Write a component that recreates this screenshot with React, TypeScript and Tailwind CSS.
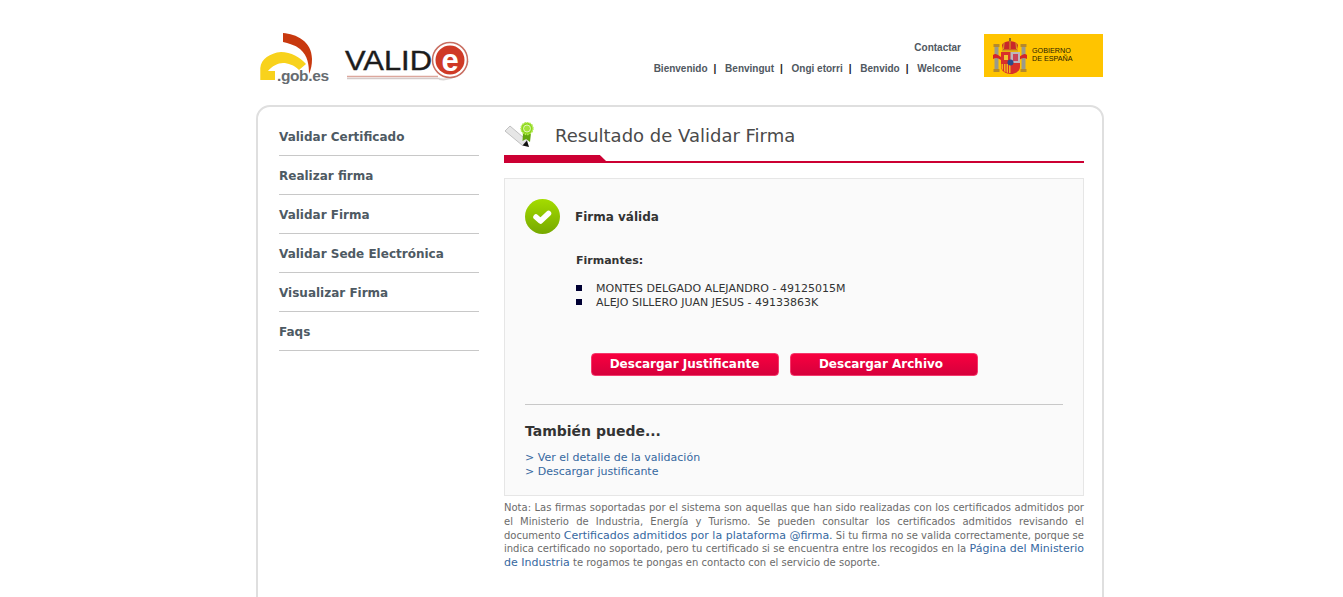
const menu = [
  "Validar Certificado",
  "Realizar firma",
  "Validar Firma",
  "Validar Sede Electrónica",
  "Visualizar Firma",
  "Faqs",
];

const idiomas = ["Bienvenido", "Benvingut", "Ongi etorri", "Benvido", "Welcome"];

function GobLogo() {
  return (
    <svg width="76" height="56" viewBox="0 0 76 56" className="block">
      <path d="M2.3 51 V39 C3 30 12 24 23 23 C33 23 42 28 48 35 L41 41 C36 36 30 34 25 34 C20 34 14 37 10 42 H17 V51 Z" fill="#f8d21c" />
      <path d="M25 4 C38 5 54 12 54 30 C54 36 53 40 51 45 C51 36 50 27 42 20 C37 16 30 14 25 13 Z" fill="#c8390f" />
      <text x="19" y="51.5" fontFamily="'Liberation Sans', sans-serif" fontSize="15.5" fontWeight="700" fill="#666b70" textLength="52" lengthAdjust="spacing">.gob.es</text>
    </svg>
  );
}

function ValideLogo() {
  return (
    <svg width="128" height="48" viewBox="0 0 128 48" className="block">
      <text x="3" y="33" fontFamily="'Liberation Sans', sans-serif" fontSize="28" fill="#1c1c1c" stroke="#1c1c1c" strokeWidth="0.4" textLength="87" lengthAdjust="spacingAndGlyphs">VALID</text>
      <path d="M5 39.5 H96" stroke="#dca79d" strokeWidth="1.4" />
      <path d="M5 41.5 H98" stroke="#d4cbca" strokeWidth="1.5" />
      <path d="M97 42 C108 44 122 38 126 24" fill="none" stroke="#dbd6d5" strokeWidth="2" />
      <circle cx="108" cy="23" r="17.5" fill="#fff" stroke="#c96f62" strokeWidth="1.5" />
      <circle cx="108" cy="23" r="14.5" fill="#cf3a26" />
      <text x="108" y="34" textAnchor="middle" fontFamily="'Liberation Sans', sans-serif" fontSize="31" fontWeight="700" fill="#fff">e</text>
    </svg>
  );
}

function GobiernoLogo() {
  return (
    <div className="flex h-[43px] w-[119px] items-center bg-[#ffc400] pl-[9px]">
      <svg width="35" height="38" viewBox="0 0 35 38" className="block shrink-0">
        {/* columnas */}
        <path d="M1.5 9 h4 v24 h-4 z M28.5 9 h4 v24 h-4 z" fill="#9a9a8c" />
        <path d="M0.5 7 h6 v3 h-6 z M27.5 7 h6 v3 h-6 z M0.5 32 h6 v3 h-6 z M27.5 32 h6 v3 h-6 z" fill="#b5892a" />
        <path d="M0 18 C3 15 6 19 8 20 L8 23 C5 21 3 20 0 22 Z M34 18 C31 15 28 19 26 20 L26 23 C29 21 31 20 34 22 Z" fill="#d3242a" />
        {/* corona */}
        <rect x="16" y="1" width="2" height="4" fill="#8a6a1f" />
        <path d="M9 8 C11 3 23 3 25 8 L24 13 H10 Z" fill="#c8282a" />
        <path d="M11 6 L10.5 12 M17 4 V12 M23 6 L23.5 12" stroke="#d9a521" strokeWidth="1" />
        <rect x="9" y="12.5" width="16" height="2" fill="#d4a017" />
        {/* escudo */}
        <path d="M8 15 H27 V30 C27 34 22 37 17.5 37 C13 37 8 34 8 30 Z" fill="#d8302a" />
        <rect x="17.5" y="15" width="9.5" height="11" fill="#bcb7bd" />
        <path d="M20 17 h5 v7 h-5 z" fill="#c9455a" />
        <rect x="11" y="18" width="4" height="5" fill="#f1c232" />
        <path d="M8.5 27 h9 v9 c-4 0 -8 -2 -9 -5 z" fill="#f1b31c" />
        <path d="M10.5 27 v7 M13 27 v9 M15.5 27 v9" stroke="#d8302a" strokeWidth="1" />
        <circle cx="17.5" cy="25.5" r="3" fill="#2d4a8a" />
      </svg>
      <div className="ml-[4px] -mt-[2px] font-['Liberation_Sans',sans-serif] text-[7.2px] leading-[8px] text-[#2a2000]">
        <div>GOBIERNO</div>
        <div>DE ESPAÑA</div>
      </div>
    </div>
  );
}

function TituloIcon() {
  return (
    <svg width="30" height="26" viewBox="0 0 30 26" className="block">
      <path d="M1 9 L6 4 L23 18.5 L18.5 23.5 Z" fill="#e6e6e6" stroke="#b4b4b4" strokeWidth="0.8" />
      <path d="M18.5 23.5 L23 18.5 L25 25 Z" fill="#111" />
      <path d="M19 11 L18.5 19 L22 17 L26 20 L27 11 Z" fill="#62a60e" />
      <circle cx="23" cy="6.5" r="6" fill="#8ed81c" stroke="#b5ea58" strokeWidth="1.5" strokeDasharray="1.5 1" />
      <circle cx="23" cy="6.5" r="3.5" fill="#a4e33a" stroke="#f0fbdc" strokeWidth="0.8" />
    </svg>
  );
}

function CheckIcon() {
  return (
    <svg width="35" height="35" viewBox="0 0 35 35" className="block shrink-0">
      <defs>
        <linearGradient id="verde" x1="0" y1="0" x2="0" y2="1">
          <stop offset="0" stopColor="#a4dc00" />
          <stop offset="1" stopColor="#76a800" />
        </linearGradient>
      </defs>
      <circle cx="17.5" cy="17.5" r="17.5" fill="url(#verde)" />
      <path d="M11 18 L15.5 22 L23.5 14.5" fill="none" stroke="#fff" strokeWidth="5.5" strokeLinejoin="round" strokeLinecap="round" />
    </svg>
  );
}

function BotonRojo({ children, className }: { children: React.ReactNode; className?: string }) {
  return (
    <button className={"h-[23px] w-[188px] rounded-[4px] border border-[#f5396c] bg-gradient-to-b from-[#f8003f] to-[#d6003c] pb-[1px] text-center text-[12px] font-bold text-white " + (className ?? "")}>
      {children}
    </button>
  );
}

export default function App() {
  return (
    <div className="min-h-[597px] overflow-hidden bg-white font-['DejaVu_Sans',sans-serif]">
      <div className="ml-[256px] h-[597px] w-[848px] overflow-hidden">
        <header className="flex h-[105px] items-start">
          <div className="ml-[2px] mt-[29px]"><GobLogo /></div>
          <div className="ml-[8px] mt-[37px]"><ValideLogo /></div>
          <div className="ml-auto mr-[23px] mt-[41px] text-right font-['Liberation_Sans',sans-serif] text-[10px] font-bold text-[#50585f]">
            <div className="h-[21px] leading-[14px]">Contactar</div>
            <div className="flex h-[14px] justify-end leading-[14px]">
              {idiomas.map((x, i) => (
                <span key={x} className="flex">
                  {x}
                  {i < idiomas.length - 1 && <span className="ml-[6px] mr-[8.75px] text-[#222]">|</span>}
                </span>
              ))}
            </div>
          </div>
          <div className="mr-[1px] mt-[34px]"><GobiernoLogo /></div>
        </header>

        <div className="flex h-[520px] rounded-t-[14px] border-2 border-[#dfdfdf] pl-[21px]">
          <nav className="mt-[10px] w-[200px] shrink-0">
            {menu.map((item) => (
              <div key={item} className="flex h-[39px] items-center border-b border-[#c8c8c8] pt-[2px] text-[12px] font-bold text-[#4e5a63]">
                {item}
              </div>
            ))}
          </nav>

          <main className="ml-[25px] w-[580px]">
            <div className="relative h-[56px] border-b-2 border-[#cc0033]">
              <div className="flex items-start">
                <div className="mt-[15px]"><TituloIcon /></div>
                <h1 className="ml-[21px] mt-[16px] text-[18px] leading-[26px] text-[#4a4a4a]">Resultado de Validar Firma</h1>
              </div>
              <div className="absolute bottom-0 left-0 h-[6px] w-[102px] bg-[#cc0033] [clip-path:polygon(0_0,94%_0,100%_100%,0_100%)]" />
            </div>

            <section className="mt-[15px] h-[318px] border border-[#e6e6e6] bg-[#fafafa] px-[20px]">
              <div className="mt-[20px] flex items-center">
                <CheckIcon />
                <span className="ml-[15px] text-[12px] font-bold text-[#333]">Firma válida</span>
              </div>
              <p className="ml-[51px] mt-[20px] text-[11px] font-bold leading-[14px] text-[#333]">Firmantes:</p>
              <ul className="ml-[51px] mt-[14px] text-[11px] leading-[14px] text-[#333]">
                <li className="flex items-center"><span className="mb-[2px] mr-[14px] h-[6px] w-[6px] bg-[#000033]" />MONTES DELGADO ALEJANDRO - 49125015M</li>
                <li className="flex items-center"><span className="mb-[2px] mr-[14px] h-[6px] w-[6px] bg-[#000033]" />ALEJO SILLERO JUAN JESUS - 49133863K</li>
              </ul>
              <div className="ml-[65.5px] mt-[43px] flex gap-[11px]">
                <BotonRojo>Descargar Justificante</BotonRojo>
                <BotonRojo className="pr-[5px]">Descargar Archivo</BotonRojo>
              </div>
              <div className="mt-[28px] border-t border-[#c8c8c8]" />
              <h2 className="mt-[17px] text-[14px] font-bold leading-[18px] text-[#333]">También puede...</h2>
              <div className="mt-[11px] text-[11px] leading-[14px] text-[#36689f]">
                <div>&gt; Ver el detalle de la validación</div>
                <div>&gt; Descargar justificante</div>
              </div>
            </section>

            <p className="mt-[5px] text-justify text-[10px] leading-[13.75px] text-[#6b6b6b]">
              Nota: Las firmas soportadas por el sistema son aquellas que han sido realizadas con los certificados admitidos por el Ministerio de Industria, Energía y Turismo. Se pueden consultar los certificados admitidos revisando el documento <span className="text-[11px] text-[#36689f]">Certificados admitidos por la plataforma @firma.</span> Si tu firma no se valida correctamente, porque se indica certificado no soportado, pero tu certificado si se encuentra entre los recogidos en la <span className="text-[11px] text-[#36689f]">Página del Ministerio de Industria</span> te rogamos te pongas en contacto con el servicio de soporte.
            </p>
          </main>
        </div>
      </div>
    </div>
  );
}
